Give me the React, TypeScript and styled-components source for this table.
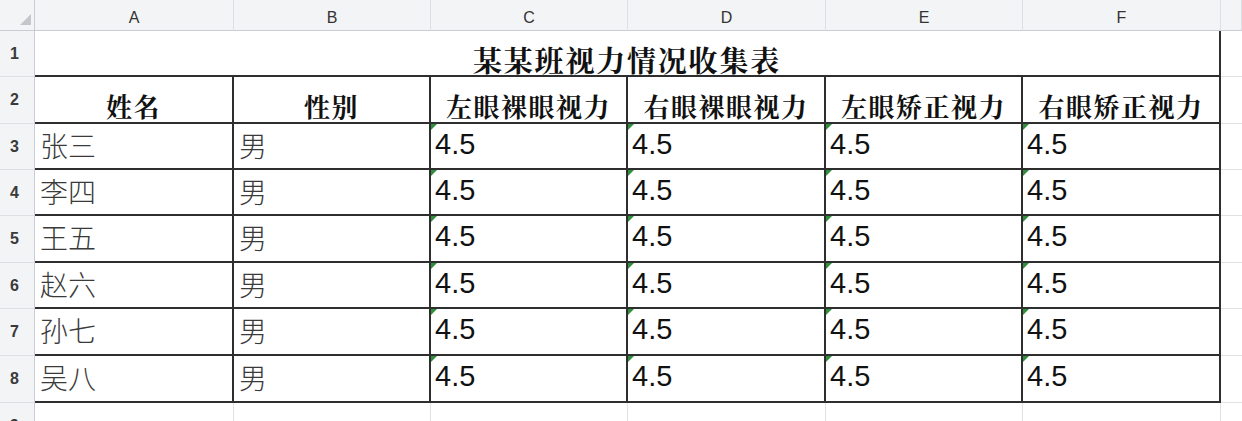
import React from "react";
import styled, { createGlobalStyle, css } from "styled-components";

const Global = createGlobalStyle`
  html, body { margin: 0; padding: 0; background: #ffffff; }
  body { font-family: "Liberation Sans", Arial, sans-serif; }
`;

const Sheet = styled.div`
  display: grid;
  grid-template-columns: 35px 199px 197px 197px 198px 197px 198px 1fr;
  grid-template-rows: 31px 46px 47px 46px 46px 47px 46px 47px 47px 47px;
  width: 1242px;
  height: 421px;
  overflow: hidden;
  background: #ffffff;
`;

const Corner = styled.div`
  position: relative;
  background: #f3f4f6;
  border-right: 1px solid #c9ccd1;
  border-bottom: 1px solid #c9ccd1;
  box-sizing: border-box;
  &::after {
    content: "";
    position: absolute;
    right: 3px;
    bottom: 5px;
    width: 0;
    height: 0;
    border-left: 11px solid transparent;
    border-bottom: 11px solid #c3c6cb;
  }
`;

const ColHead = styled.div`
  display: flex;
  align-items: center;
  justify-content: center;
  background: #f3f4f6;
  border-right: 1px solid #dcdfe3;
  border-bottom: 1px solid #c9ccd1;
  box-sizing: border-box;
  font-family: "Liberation Sans", Arial, sans-serif;
  font-size: 16px;
  color: #333;
  padding-top: 5px;
`;

const RowHead = styled.div`
  display: flex;
  align-items: center;
  justify-content: center;
  background: #f3f4f6;
  border-right: 1px solid #c9ccd1;
  border-bottom: 1px solid #dcdfe3;
  box-sizing: border-box;
  font-family: "Liberation Sans", Arial, sans-serif;
  font-size: 16px;
  font-weight: 700;
  color: #3a3a3a;
  padding-right: 5px;
`;

const Title = styled.div`
  grid-column: 2 / span 6;
  display: flex;
  align-items: flex-end;
  justify-content: center;
  box-sizing: border-box;
  border-right: 2px solid #2e2e2e;
  border-bottom: 2px solid #2e2e2e;
  font-family: "Noto Serif CJK SC", "Noto Sans CJK SC", serif;
  font-size: 29px;
  font-weight: 700;
  letter-spacing: 1.8px;
  color: #111;
  padding-bottom: 1px;
  line-height: 1;
`;

const Filler = styled.div<{ $last?: boolean }>`
  box-sizing: border-box;
  border-bottom: 1px solid #e0e2e5;
  ${(p) =>
    !p.$last &&
    css`
      border-right: 1px solid #e0e2e5;
    `}
`;

const HeadCell = styled.div`
  display: flex;
  align-items: flex-end;
  justify-content: center;
  box-sizing: border-box;
  border-right: 2px solid #2e2e2e;
  border-bottom: 2px solid #2e2e2e;
  font-family: "Noto Serif CJK SC", "Noto Sans CJK SC", serif;
  font-size: 26px;
  font-weight: 700;
  letter-spacing: 1.5px;
  color: #111;
  line-height: 1;
  padding-bottom: 3px;
`;

const TextCell = styled.div`
  display: flex;
  align-items: center;
  box-sizing: border-box;
  border-right: 2px solid #2e2e2e;
  border-bottom: 2px solid #2e2e2e;
  padding-left: 5px;
  padding-bottom: 3px;
  font-family: "Noto Sans CJK SC", sans-serif;
  font-size: 28px;
  font-weight: 300;
  color: #3a3a3a;
  line-height: 1;
`;

const NumCell = styled.div`
  position: relative;
  display: flex;
  align-items: center;
  box-sizing: border-box;
  border-right: 2px solid #2e2e2e;
  border-bottom: 2px solid #2e2e2e;
  padding-left: 4px;
  padding-bottom: 4px;
  font-family: "Liberation Sans", Arial, sans-serif;
  font-size: 29px;
  color: #111;
  line-height: 1;
  &::before {
    content: "";
    position: absolute;
    left: 0;
    top: 0;
    width: 0;
    height: 0;
    border-top: 6px solid #2f8f3c;
    border-right: 6px solid transparent;
  }
`;

const EmptyCell = styled.div<{ $last?: boolean }>`
  box-sizing: border-box;
  ${(p) =>
    !p.$last &&
    css`
      border-right: 1px solid #e0e2e5;
    `}
`;

const cols = ["A", "B", "C", "D", "E", "F"];
const heads = ["姓名", "性别", "左眼裸眼视力", "右眼裸眼视力", "左眼矫正视力", "右眼矫正视力"];
const people = ["张三", "李四", "王五", "赵六", "孙七", "吴八"];

export default function App() {
  return (
    <>
      <Global />
      <Sheet>
        <Corner />
        {cols.map((c) => (
          <ColHead key={c}>{c}</ColHead>
        ))}
        <ColHead />

        <RowHead>1</RowHead>
        <Title>某某班视力情况收集表</Title>
        <Filler $last />

        <RowHead>2</RowHead>
        {heads.map((h) => (
          <HeadCell key={h}>{h}</HeadCell>
        ))}
        <Filler $last />

        {people.map((name, i) => (
          <React.Fragment key={name}>
            <RowHead>{i + 3}</RowHead>
            <TextCell>{name}</TextCell>
            <TextCell>男</TextCell>
            <NumCell>4.5</NumCell>
            <NumCell>4.5</NumCell>
            <NumCell>4.5</NumCell>
            <NumCell>4.5</NumCell>
            <Filler $last />
          </React.Fragment>
        ))}

        <RowHead>9</RowHead>
        {cols.map((c) => (
          <EmptyCell key={c} />
        ))}
        <EmptyCell $last />
      </Sheet>
    </>
  );
}
